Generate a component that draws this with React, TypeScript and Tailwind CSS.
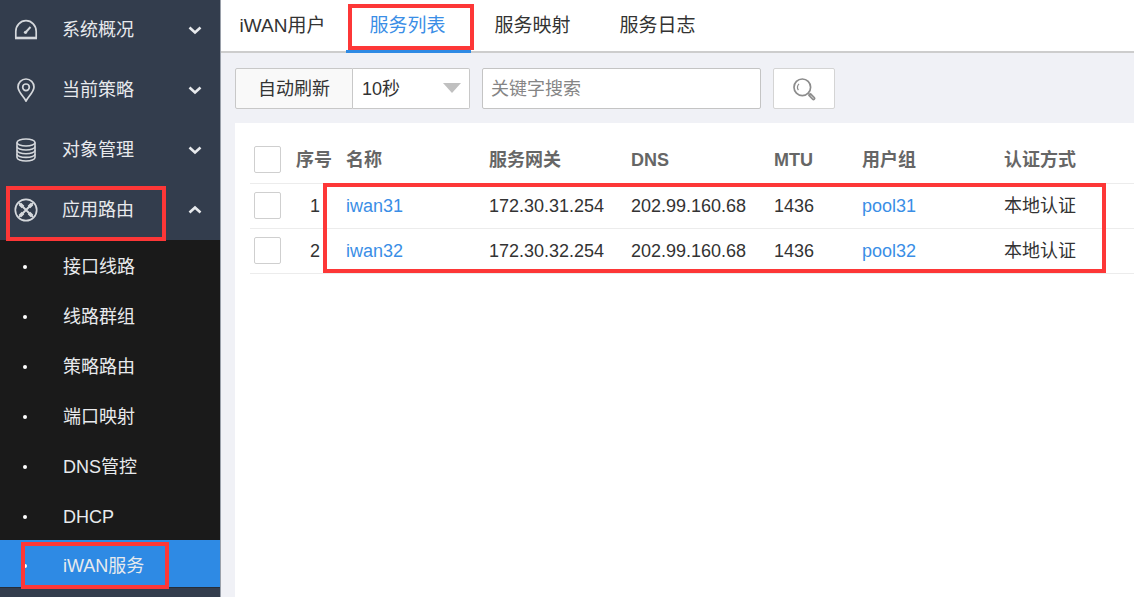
import React, { useState } from "react";

type IconProps = { className?: string };

function GaugeIcon({ className }: IconProps) {
  return (
    <svg viewBox="0 0 24 24" className={className} fill="none" stroke="currentColor" strokeWidth="1.7" aria-hidden="true">
      <path d="M1.800 20v-6.500a10.200 10.800 0 0 1 20.400 0v6.500" />
      <path d="M1 20h22" strokeWidth="2.600" />
      <path d="M11.500 14.500l5-5.500" strokeWidth="1.900" />
      <circle cx="11.500" cy="14.300" r="1.600" fill="currentColor" stroke="none" />
    </svg>
  );
}

function PinIcon({ className }: IconProps) {
  return (
    <svg viewBox="0 0 24 24" className={className} fill="none" stroke="currentColor" strokeWidth="1.700" aria-hidden="true">
      <path d="M12 23C9.500 18.500 4 13.700 4 9a8 8 0 0 1 16 0c0 4.700-5.500 9.500-8 14z" />
      <circle cx="12" cy="9.300" r="3.300" />
    </svg>
  );
}

function DatabaseIcon({ className }: IconProps) {
  return (
    <svg viewBox="0 0 24 24" className={className} fill="none" stroke="currentColor" strokeWidth="1.600" aria-hidden="true">
      <ellipse cx="12" cy="4.500" rx="9" ry="3.500" />
      <path d="M3 4.500v15c0 2 4 3.500 9 3.500s9-1.500 9-3.500v-15" />
      <path d="M3 8.500c0 2 4 3.500 9 3.500s9-1.500 9-3.500" />
      <path d="M3 12.200c0 2 4 3.500 9 3.500s9-1.500 9-3.500" />
      <path d="M3 15.900c0 2 4 3.500 9 3.500s9-1.500 9-3.500" />
    </svg>
  );
}

function RouteIcon({ className }: IconProps) {
  return (
    <svg viewBox="0 0 24 24" className={className} fill="none" stroke="currentColor" strokeWidth="1.700" aria-hidden="true">
      <circle cx="12" cy="12" r="10.700" />
      <path d="M5 5l14 14M19 5L5 19" strokeWidth="2" />
      <path d="M6 6l3 3M18 6l-3 3M6 18l3-3M18 18l-3-3" strokeWidth="3.600" />
    </svg>
  );
}

function Chevron({ up }: { up?: boolean }) {
  return (
    <svg viewBox="0 0 14 10" className="h-[10px] w-[14px]" fill="none" stroke="currentColor" strokeWidth="2.600" aria-hidden="true">
      <path d={up ? "M1.500 7.500L7 2.500l5.500 5" : "M1.500 2.500L7 7.500l5.500-5"} />
    </svg>
  );
}

function SearchIcon() {
  return (
    <svg viewBox="0 0 24 24" className="h-6 w-6 text-[#8c8c8c]" fill="none" stroke="currentColor" aria-hidden="true">
      <circle cx="10.300" cy="10.300" r="8.300" strokeWidth="1.700" />
      <path d="M7 6.800a5.200 5.200 0 0 0-.6 6.400" strokeWidth="1.200" />
      <path d="M16.400 16.400l1.600 1.600" strokeWidth="1.600" />
      <path d="M17 18.600l1.700-1.700 3.600 3.600a1 1 0 0 1-1.700 1.700z" strokeWidth="1.500" fill="#ccc" />
    </svg>
  );
}

const sections = [
  { label: "系统概况", Icon: GaugeIcon },
  { label: "当前策略", Icon: PinIcon },
  { label: "对象管理", Icon: DatabaseIcon },
  { label: "应用路由", Icon: RouteIcon, open: true },
];

const routes = ["接口线路", "线路群组", "策略路由", "端口映射", "DNS管控", "DHCP", "iWAN服务"];

const tabs = ["iWAN用户", "服务列表", "服务映射", "服务日志"];

const services = [
  { id: 1, name: "iwan31", gateway: "172.30.31.254", dns: "202.99.160.68", mtu: 1436, pool: "pool31", auth: "本地认证" },
  { id: 2, name: "iwan32", gateway: "172.30.32.254", dns: "202.99.160.68", mtu: 1436, pool: "pool32", auth: "本地认证" },
];

function Marker({ className }: { className: string }) {
  return <span aria-hidden="true" className={`pointer-events-none absolute z-10 border-4 border-[#fd3737] ${className}`} />;
}

function Sidebar() {
  return (
    <nav className="w-[221px] shrink-0 border-r border-[#9aa0aa] bg-[#333d4d] text-lg text-[#e8eaed]">
      {sections.map(({ label, Icon, open }) => (
        <div key={label} className="relative">
          <button type="button" aria-expanded={!!open} className="flex h-15 w-full items-center pr-[18px] pl-[14px] text-left">
            <Icon className="h-6 w-6 text-[#d5d8dc]" />
            <span className="ml-6 flex-1">{label}</span>
            <Chevron up={open} />
          </button>
          {open && <Marker className="top-[6px] left-[6px] h-[55px] w-[160px]" />}
        </div>
      ))}
      <ul className="bg-[#1a1a1a]">
        {routes.map((label) => {
          const active = label === "iWAN服务";
          return (
            <li key={label} className="relative">
              <a
                href="#"
                aria-current={active ? "page" : undefined}
                className={
                  active
                    ? "flex h-12 items-center border-b border-[#262d38] bg-[#2e8ae4] pt-1 pl-[23px]"
                    : "flex h-[50px] items-center pt-1 pl-[23px]"
                }
              >
                <span className="h-1 w-1 rounded-full bg-white" />
                <span className="ml-9">{label}</span>
              </a>
              {active && <Marker className="top-[2px] left-[21px] h-[47px] w-[148px]" />}
            </li>
          );
        })}
      </ul>
    </nav>
  );
}

function Tabs() {
  return (
    <div className="flex h-[53px] border-b-2 border-[#cdcdcd] bg-white text-[19px]">
      {tabs.map((label, i) => {
        const active = i === 1;
        return (
          <a
            key={label}
            href="#"
            aria-current={active ? "page" : undefined}
            className={
              active
                ? "relative flex h-[53px] w-[125px] items-center justify-center border-b-[3px] border-[#2e8ae4] pt-[3px] pr-[2px] text-[#3a8ee6]"
                : "flex h-[50px] w-[125px] items-center justify-center pt-[3px] pr-[2px]"
            }
          >
            {label}
            {active && <Marker className="top-1 left-[2px] h-[46px] w-[126px]" />}
          </a>
        );
      })}
    </div>
  );
}

function Toolbar() {
  const [period, setPeriod] = useState("10");
  return (
    <div className="flex h-[41px] text-lg">
      <button type="button" className="w-[118px] rounded-l-xs border border-[#c8c8c8] bg-[#f9f9f9]">
        自动刷新
      </button>
      <div className="relative w-[117px]">
        <select
          aria-label="刷新间隔"
          value={period}
          onChange={(e) => setPeriod(e.target.value)}
          className="h-full w-full appearance-none rounded-r-xs border border-l-0 border-[#c8c8c8] bg-white pl-[9px]"
        >
          <option value="10">10秒</option>
          <option value="30">30秒</option>
          <option value="60">60秒</option>
        </select>
        <svg viewBox="0 0 18 10" className="pointer-events-none absolute top-[15px] right-[9px] h-[10px] w-[18px]" aria-hidden="true">
          <path d="M0 0h18L9 10z" fill="#c0c0c0" />
        </svg>
      </div>
      <input
        type="text"
        aria-label="关键字搜索"
        placeholder="关键字搜索"
        className="ml-3 w-[279px] rounded-xs border border-[#c4c4c4] bg-white px-2 placeholder:text-[#858585]"
      />
      <button
        type="button"
        aria-label="搜索"
        className="ml-3 flex w-[62px] items-center justify-center rounded-xs border border-[#d4d4d4] bg-white"
      >
        <SearchIcon />
      </button>
    </div>
  );
}

function Tick({ label }: { label: string }) {
  return (
    <input
      type="checkbox"
      aria-label={label}
      className="block h-[27px] w-[27px] appearance-none rounded-xs border border-[#cfcfcf] bg-white checked:bg-[#2e8ae4]"
    />
  );
}

function ServiceTable() {
  return (
    <div className="relative">
      <table className="w-full table-fixed text-left text-lg leading-6 whitespace-nowrap">
        <colgroup>
          <col className="w-[42px]" />
          <col className="w-[54px]" />
          <col className="w-[143px]" />
          <col className="w-[142px]" />
          <col className="w-[143px]" />
          <col className="w-[88px]" />
          <col className="w-[142px]" />
          <col />
        </colgroup>
        <thead>
          <tr className="h-[46px] border-b border-[#ececec] text-[#666]">
            <th className="pl-1"><Tick label="全选" /></th>
            <th className="pl-1 font-bold">序号</th>
            <th className="font-bold">名称</th>
            <th className="font-bold">服务网关</th>
            <th className="font-bold">DNS</th>
            <th className="font-bold">MTU</th>
            <th className="font-bold">用户组</th>
            <th className="font-bold">认证方式</th>
          </tr>
        </thead>
        <tbody>
          {services.map((s) => (
            <tr key={s.id} className="h-[45px] border-b border-[#ececec]">
              <td className="pl-1"><Tick label={s.name} /></td>
              <td className="pr-[26px] text-right">{s.id}</td>
              <td><a href="#" className="text-[#3a8ee6]">{s.name}</a></td>
              <td>{s.gateway}</td>
              <td>{s.dns}</td>
              <td>{s.mtu}</td>
              <td><a href="#" className="text-[#3a8ee6]">{s.pool}</a></td>
              <td>{s.auth}</td>
            </tr>
          ))}
        </tbody>
      </table>
      <Marker className="top-[46px] left-[73px] h-[90px] w-[783px]" />
    </div>
  );
}

export default function App() {
  return (
    <div className="flex min-h-screen bg-[#f0f1f6] font-['Liberation_Sans','Noto_Sans_CJK_SC',sans-serif] text-[#333]">
      <Sidebar />
      <main className="flex min-w-0 flex-1 flex-col">
        <Tabs />
        <div className="flex flex-1 flex-col gap-[14px] pt-[15px] pl-[14px]">
          <Toolbar />
          <section className="flex-1 bg-white pt-[14px] pl-[15px]">
            <ServiceTable />
          </section>
        </div>
      </main>
    </div>
  );
}
